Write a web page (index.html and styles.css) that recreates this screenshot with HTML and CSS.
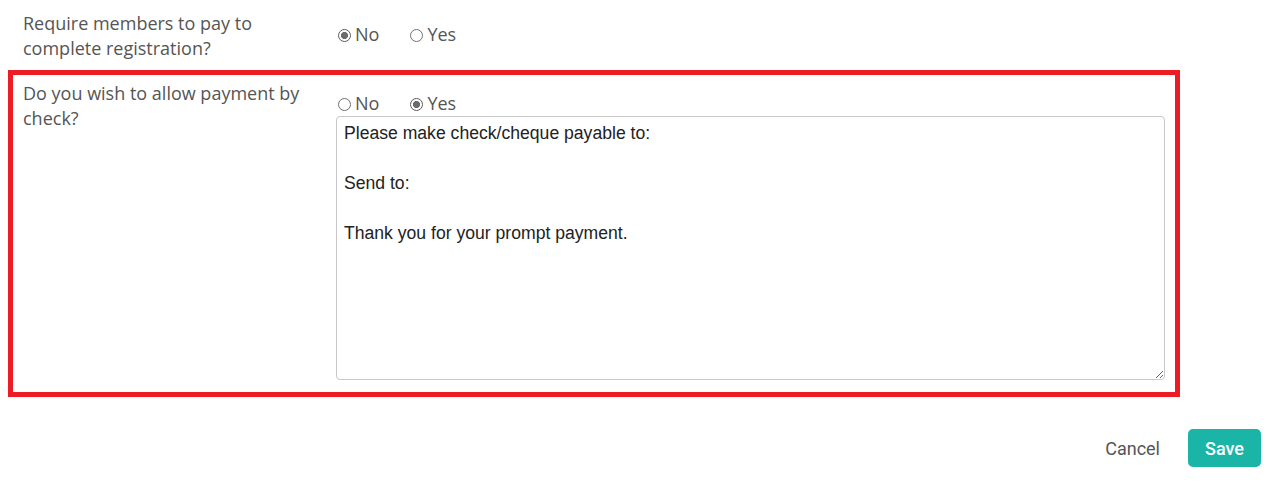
FILE: index.html
```html
<!DOCTYPE html>
<html>
<head>
<meta charset="utf-8">
<link rel="stylesheet" href="styles.css">
</head>
<body>
<div class="form">
  <div class="row row-plain">
    <div class="label">Require members to pay to complete registration?</div>
    <div class="field">
      <div class="radios">
        <label class="radio"><span class="dot checked"></span>No</label>
        <label class="radio"><span class="dot"></span>Yes</label>
      </div>
    </div>
  </div>
  <div class="row row-highlight">
    <div class="label">Do you wish to allow payment by check?</div>
    <div class="field">
      <div class="radios">
        <label class="radio"><span class="dot"></span>No</label>
        <label class="radio"><span class="dot checked"></span>Yes</label>
      </div>
      <textarea class="note">Please make check/cheque payable to:

Send to:

Thank you for your prompt payment.</textarea>
    </div>
  </div>
  <div class="actions">
    <button class="btn-cancel">Cancel</button>
    <button class="btn-save">Save</button>
  </div>
</div>
</body>
</html>
```
FILE: styles.css
```css
html, body {
  margin: 0;
  padding: 0;
  background: #fff;
}
.form {
  width: 1278px;
}
.row {
  display: grid;
  grid-template-columns: 313px 829px;
  margin-left: 8px;
  width: 1172px;
  box-sizing: border-box;
  padding-left: 10px;
  border-left: 5px solid transparent;
  border-right: 5px solid transparent;
}
.row-plain {
  padding-top: 10px;
  padding-bottom: 10px;
}
.row-highlight {
  border: 5px solid #ed1c24;
  padding-top: 5px;
  padding-bottom: 12px;
}
.label {
  font-family: "Open Sans", sans-serif;
  font-size: 18px;
  line-height: 25px;
  color: #555;
  padding-top: 1px;
  margin-bottom: -1px;
  padding-right: 10px;
}
.field {
  display: flex;
  flex-direction: column;
}
.radios {
  display: flex;
  gap: 31px;
  padding-top: 11px;
  padding-left: 2px;
  font-family: "Open Sans", sans-serif;
  font-size: 18px;
  line-height: 25px;
  color: #555;
}
.row-plain .radios {
  padding-top: 12px;
}
.radio {
  display: flex;
  align-items: center;
}
.dot {
  width: 13px;
  height: 13px;
  box-sizing: border-box;
  border: 1px solid #6f6f6f;
  border-radius: 50%;
  margin-right: 4px;
  margin-top: 1px;
  background: #fff;
}
.dot.checked {
  border-color: #5a5a5a;
  background: radial-gradient(circle, #6a6a6a 0, #6a6a6a 3.2px, #fff 3.9px);
}
.note {
  display: block;
  width: 829px;
  height: 264px;
  box-sizing: border-box;
  margin: 0;
  border: 1px solid #c8c8c8;
  border-radius: 4px;
  padding: 4px 7px;
  font-family: "Liberation Sans", Arial, sans-serif;
  font-size: 17.6px;
  line-height: 25px;
  color: #222;
  resize: vertical;
  outline: none;
}
.actions {
  display: flex;
  justify-content: flex-end;
  align-items: center;
  gap: 28px;
  padding: 32px 17px 0 0;
}
.btn-cancel {
  border: none;
  background: none;
  padding: 0;
  font-family: Roboto, sans-serif;
  font-size: 18px;
  color: #555;
}
.btn-save {
  border: none;
  background: #1ab5a6;
  color: #fff;
  border-radius: 5px;
  width: 73px;
  height: 38px;
  font-family: Roboto, sans-serif;
  font-size: 18px;
  font-weight: 500;
  padding: 0;
}
```
